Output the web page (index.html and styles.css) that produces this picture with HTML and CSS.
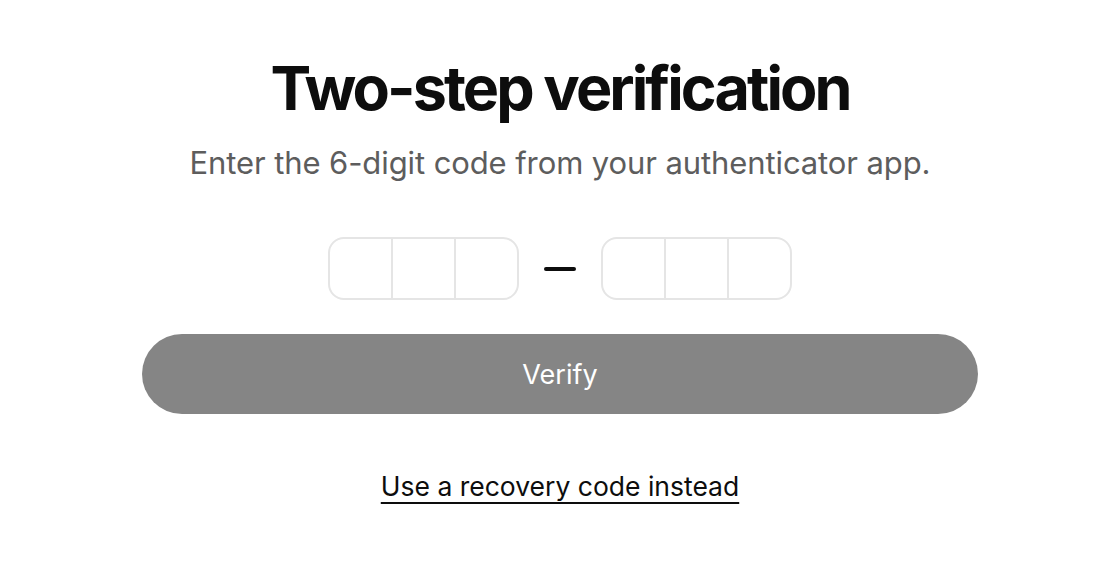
FILE: index.html
```html
<!DOCTYPE html>
<html>
<head>
<meta charset="utf-8">
<link rel="stylesheet" href="styles.css">
</head>
<body>
<main class="page">
  <h1 class="title">Two-step verification</h1>
  <p class="subtitle">Enter the 6-digit code from your authenticator app.</p>
  <div class="code">
    <div class="group">
      <input class="cell" maxlength="1" inputmode="numeric">
      <input class="cell" maxlength="1" inputmode="numeric">
      <input class="cell" maxlength="1" inputmode="numeric">
    </div>
    <span class="dash"></span>
    <div class="group">
      <input class="cell" maxlength="1" inputmode="numeric">
      <input class="cell" maxlength="1" inputmode="numeric">
      <input class="cell" maxlength="1" inputmode="numeric">
    </div>
  </div>
  <button class="verify" disabled>Verify</button>
  <a class="recovery" href="#">Use a recovery code instead</a>
</main>
</body>
</html>
```

FILE: styles.css
```css
* { box-sizing: border-box; }
html, body { margin: 0; padding: 0; background: #fff; }
body { font-family: Inter, "Liberation Sans", Arial, sans-serif; color: #0d0d0d; }
.page {
  width: 1120px;
  height: 576px;
  display: flex;
  flex-direction: column;
  align-items: center;
  padding-top: 52px;
}
.title {
  margin: 0;
  font-size: 61px;
  font-weight: 700;
  letter-spacing: -2.9px;
  line-height: 72px;
}
.subtitle {
  margin: 20px 0 0;
  font-size: 31px;
  line-height: 38px;
  color: #5d5d5d;
  font-weight: 400;
  letter-spacing: -0.1px;
}
.code {
  margin-top: 55px;
  display: flex;
  align-items: center;
  gap: 25px;
}
.group {
  display: flex;
  width: 191px;
  height: 63px;
  border: 2px solid #e5e5e5;
  border-radius: 16px;
  overflow: hidden;
}
.cell {
  flex: 1;
  min-width: 0;
  border: none;
  border-right: 2px solid #e5e5e5;
  background: transparent;
  outline: none;
  font: inherit;
  text-align: center;
}
.cell:last-child { border-right: none; }
.dash {
  width: 32px;
  height: 4px;
  background: #0d0d0d;
  border-radius: 2px;
}
.verify {
  margin-top: 34px;
  width: 836px;
  height: 80px;
  border: none;
  border-radius: 40px;
  background: #858585;
  color: #fff;
  font-family: inherit;
  font-size: 27px;
  font-weight: 400;
}
.recovery {
  margin-top: 56px;
  font-size: 26.5px;
  line-height: 32px;
  color: #0d0d0d;
  text-decoration: underline;
  text-decoration-thickness: 2px;
  text-underline-offset: 6px;
}
```
